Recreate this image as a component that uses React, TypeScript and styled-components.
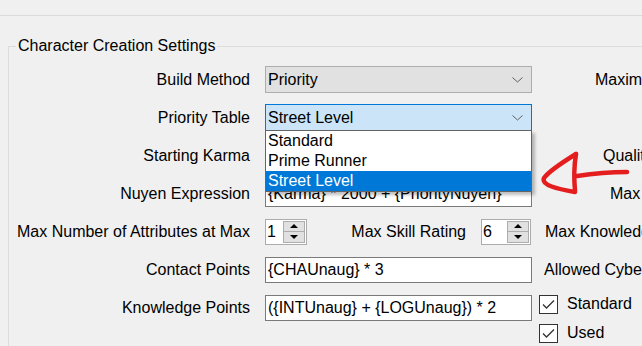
import React from 'react';
import styled, { createGlobalStyle } from 'styled-components';

const GlobalStyle = createGlobalStyle`
  html, body {
    margin: 0;
    background: #f0f0f0;
    overflow: hidden;
    font-family: "Liberation Sans", Arial, sans-serif;
    font-size: 16px;
    color: #000;
  }
`;

const Page = styled.div`
  position: relative;
  width: 642px;
  height: 346px;
  overflow: hidden;
`;

const TopStrip = styled.div`
  height: 15px;
  border-bottom: 1px solid #dadada;
`;

const GroupBox = styled.fieldset`
  margin: 21px 0 0 8px;
  padding: 11px 0 0 0;
  border: 1px solid #dcdcdc;
  border-right: none;
  border-bottom: none;
  min-width: 0;
  height: 300px;
`;

const Legend = styled.legend`
  margin-left: 7px;
  padding: 0 2px;
  line-height: 18px;
  white-space: nowrap;
`;

const FormGrid = styled.div`
  display: grid;
  grid-template-columns: 256px 274px 1fr;
  grid-auto-rows: 27px;
  row-gap: 11px;
  align-items: center;
`;

const Label = styled.div`
  text-align: right;
  padding-right: 15px;
  white-space: nowrap;
`;

const SideLabel = styled.div<{ $indent: number }>`
  padding-left: ${p => p.$indent}px;
  white-space: nowrap;
`;

const Combo = styled.div<{ $open?: boolean }>`
  position: relative;
  box-sizing: border-box;
  width: 267px;
  height: 27px;
  display: flex;
  align-items: center;
  justify-content: space-between;
  padding: 0 8px 0 2px;
  background: ${p => (p.$open ? '#cce4f7' : '#e1e1e1')};
  border: 1px solid ${p => (p.$open ? '#0078d7' : '#adadad')};
`;

const DropList = styled.ul`
  position: absolute;
  top: 100%;
  left: -1px;
  right: -1px;
  margin: 0;
  padding: 0;
  list-style: none;
  background: #fff;
  border: 1px solid #646464;
  box-shadow: 3px 3px 3px rgba(0, 0, 0, 0.25);
  z-index: 5;
`;

const DropItem = styled.li<{ $selected?: boolean }>`
  height: 20px;
  line-height: 20px;
  padding-left: 2px;
  background: ${p => (p.$selected ? '#0078d7' : 'transparent')};
  color: ${p => (p.$selected ? '#fff' : '#000')};
`;

const TextBox = styled.div`
  box-sizing: border-box;
  width: 267px;
  height: 26px;
  display: flex;
  align-items: center;
  padding-left: 2px;
  background: #fff;
  border: 1px solid #7a7a7a;
  white-space: nowrap;
  overflow: hidden;
`;

const SpinRow = styled.div`
  display: flex;
  align-items: center;
  width: 266px;
`;

const SpinLabel = styled.div`
  flex: 1;
  text-align: right;
  padding-right: 15px;
  white-space: nowrap;
`;

const Spinner = styled.div<{ $width: number }>`
  box-sizing: border-box;
  width: ${p => p.$width}px;
  height: 26px;
  display: flex;
  background: #fff;
  border: 1px solid #acacac;
`;

const SpinValue = styled.div`
  flex: 1;
  padding-left: 1px;
  line-height: 24px;
`;

const SpinButtons = styled.div`
  width: 22px;
  margin: 1px 1px 1px 0;
  display: flex;
  flex-direction: column;
`;

const SpinButton = styled.div`
  flex: 1;
  display: flex;
  align-items: center;
  justify-content: center;
  background: #e1e1e1;
  border: 1px solid #adadad;
  & + & {
    border-top: none;
  }
`;

const Triangle = styled.div<{ $down?: boolean }>`
  width: 0;
  height: 0;
  border-left: 4px solid transparent;
  border-right: 4px solid transparent;
  ${p => (p.$down ? 'border-top: 4px solid #000;' : 'border-bottom: 4px solid #000;')}
`;

const CheckList = styled.div`
  grid-row: 7 / span 2;
  grid-column: 3;
  align-self: start;
  display: flex;
  flex-direction: column;
  gap: 11px;
  margin-top: 1px;
`;

const CheckRow = styled.div`
  display: flex;
  align-items: center;
  gap: 9px;
  height: 18px;
  white-space: nowrap;
`;

const CheckBox = styled.div`
  box-sizing: border-box;
  width: 19px;
  height: 19px;
  background: #fff;
  border: 1px solid #333;
  display: flex;
  align-items: center;
  justify-content: center;
`;

const Overlay = styled.svg`
  position: absolute;
  left: 0;
  top: 0;
  pointer-events: none;
`;

const Chevron = () => (
  <svg width="11" height="6" viewBox="0 0 11 6">
    <polyline points="0.5,0.5 5.5,5 10.5,0.5" fill="none" stroke="#606060" strokeWidth="1" />
  </svg>
);

const Check = () => (
  <svg width="13" height="11" viewBox="0 0 13 11">
    <polyline points="1,5.5 4.5,9 12,1.5" fill="none" stroke="#333" strokeWidth="1.3" />
  </svg>
);

const NumberBox: React.FC<{ value: string; width: number }> = ({ value, width }) => (
  <Spinner $width={width}>
    <SpinValue>{value}</SpinValue>
    <SpinButtons>
      <SpinButton><Triangle /></SpinButton>
      <SpinButton><Triangle $down /></SpinButton>
    </SpinButtons>
  </Spinner>
);

const priorityTables = ['Standard', 'Prime Runner', 'Street Level'];

const App: React.FC = () => {
  const selected = 'Street Level';

  return (
    <Page>
      <GlobalStyle />
      <TopStrip />
      <GroupBox>
        <Legend>Character Creation Settings</Legend>
        <FormGrid>
          <Label>Build Method</Label>
          <Combo>
            <span>Priority</span>
            <Chevron />
          </Combo>
          <SideLabel $indent={56}>Maximum Karma</SideLabel>

          <Label>Priority Table</Label>
          <Combo $open>
            <span>{selected}</span>
            <Chevron />
            <DropList>
              {priorityTables.map(t => (
                <DropItem key={t} $selected={t === selected}>{t}</DropItem>
              ))}
            </DropList>
          </Combo>
          <div />

          <Label>Starting Karma</Label>
          <TextBox />
          <SideLabel $indent={64}>Qualities</SideLabel>

          <Label>Nuyen Expression</Label>
          <TextBox>{'{Karma} * 2000 + {PriorityNuyen}'}</TextBox>
          <SideLabel $indent={71}>Max Nuyen</SideLabel>

          <Label>Max Number of Attributes at Max</Label>
          <SpinRow>
            <NumberBox value="1" width={42} />
            <SpinLabel>Max Skill Rating</SpinLabel>
            <NumberBox value="6" width={50} />
          </SpinRow>
          <SideLabel $indent={6}>Max Knowledge Skill Rating</SideLabel>

          <Label>Contact Points</Label>
          <TextBox>{'{CHAUnaug} * 3'}</TextBox>
          <SideLabel $indent={5}>Allowed Cyberware Grades</SideLabel>

          <Label>Knowledge Points</Label>
          <TextBox>{'({INTUnaug} + {LOGUnaug}) * 2'}</TextBox>
          <CheckList>
            <CheckRow><CheckBox><Check /></CheckBox>Standard</CheckRow>
            <CheckRow><CheckBox><Check /></CheckBox>Used</CheckRow>
          </CheckList>
        </FormGrid>
      </GroupBox>

      <Overlay width="642" height="346" viewBox="0 0 642 346">
        <g fill="none" stroke="#e41e1e" strokeWidth="4.5" strokeLinecap="round" strokeLinejoin="round">
          <path d="M627 172 C 608 172 590 174 577 176" />
          <path d="M576 154 C 574 166 574 180 575 191" />
          <path d="M576 154 C 563 162 549 171 544 178 C 541 185 557 189 575 192" />
        </g>
      </Overlay>
    </Page>
  );
};

export default App;
